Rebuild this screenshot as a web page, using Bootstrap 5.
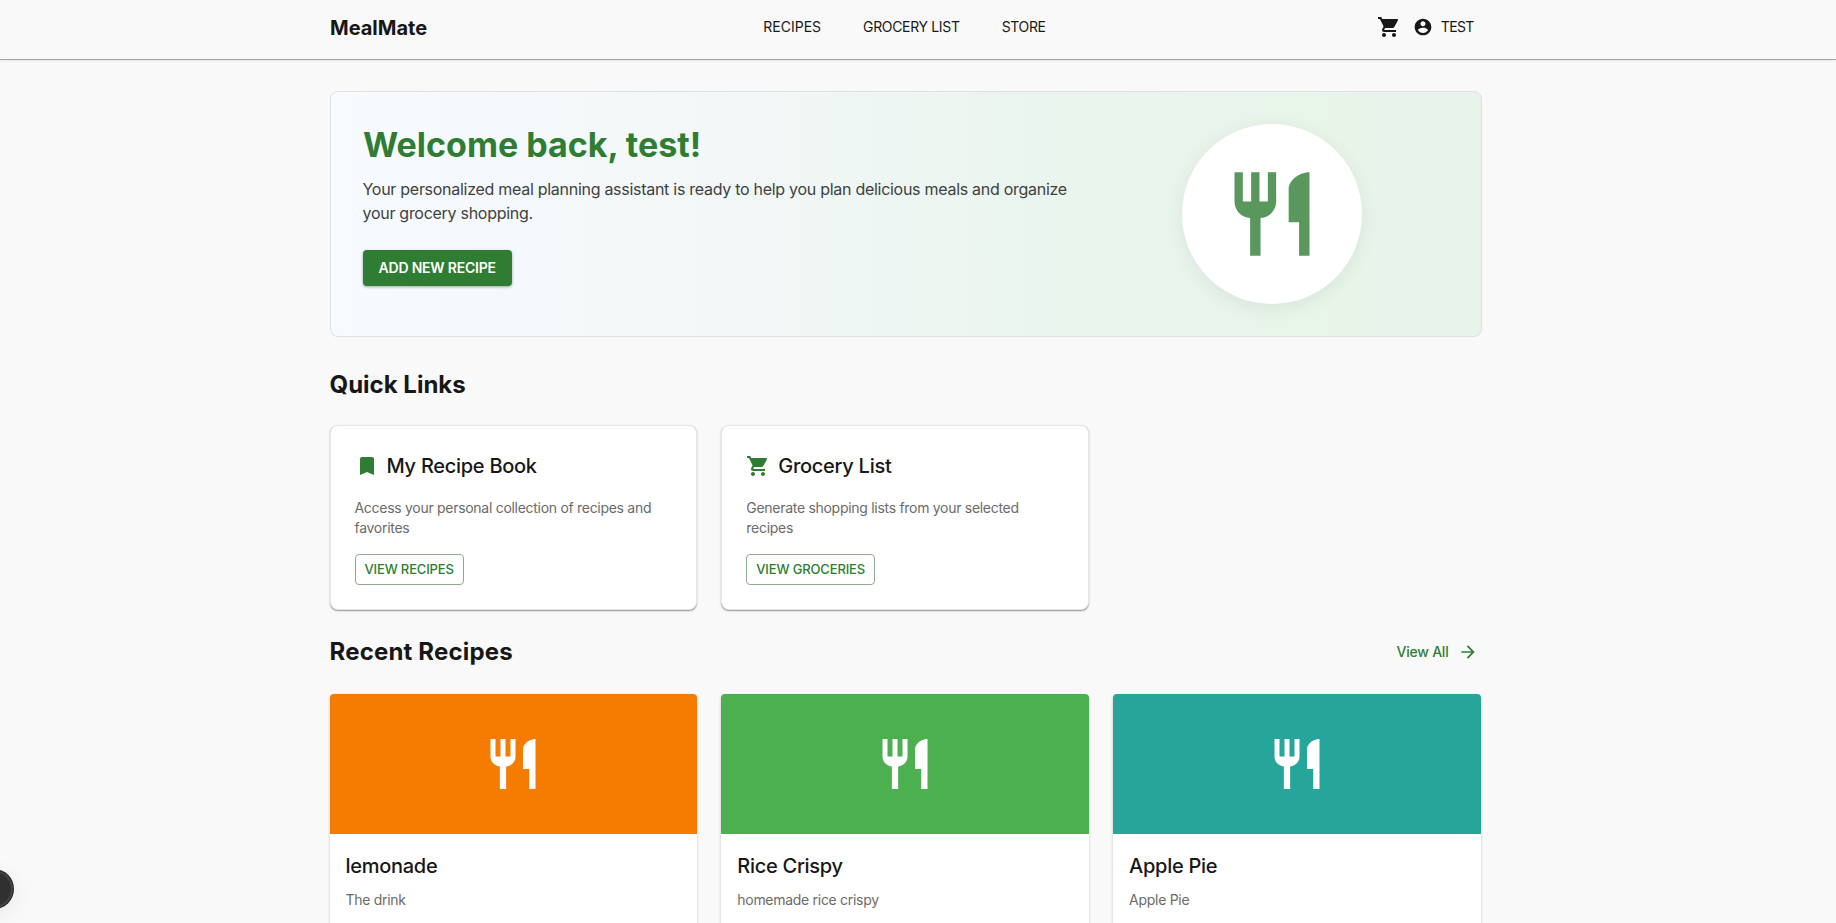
<!DOCTYPE html>
<html lang="en">
<head>
<meta charset="utf-8">
<meta name="viewport" content="width=device-width, initial-scale=1">
<title>MealMate</title>
<link href="https://cdn.jsdelivr.net/npm/bootstrap@5.3.0/dist/css/bootstrap.min.css" rel="stylesheet">
<style>
:root{--green:#2e7d32;--ink:#171717}
html,body{height:100%;overflow:hidden}
body{font-family:Inter,"Liberation Sans",sans-serif;background:#f9f9f9;color:var(--ink);font-size:14px;line-height:20px}
svg{display:block;fill:currentColor;flex:none}
a{color:inherit;text-decoration:none}
h1,h2,h3,p{margin:0}
.page-frame{padding-right:25px}
.content-width{width:1152px;margin:0 auto}
.site-header{height:60px;border-bottom:1px solid #a3a3a3;box-shadow:0 1px 2px rgba(0,0,0,.08);padding-bottom:13px}
.brand{font-size:20px;line-height:24px;font-weight:700;letter-spacing:0;padding:1px 0 0 .5px;display:block}
.site-nav{gap:42px;font-size:14px;color:#1a1a1a;padding-left:6px}
.tight{letter-spacing:-.34px}
.hero{height:246px;margin-top:31px;padding:32px;border:1px solid #dbe0e0;border-radius:8px;background:linear-gradient(90deg,#f7faff 0%,#f1f7f6 38%,#ebf5ef 60%,#e8f5e9 85%,#e8f3e9 100%);gap:24px}
.hero-copy{width:708px}
.hero h1{font-size:34px;line-height:42px;font-weight:700;color:var(--green);margin-bottom:11px;padding-left:.5px}
.hero p{font-size:16px;line-height:24px;letter-spacing:-.28px;color:#3d4142;margin-bottom:25px}
.btn-add{height:36px;padding:0 16px;border-radius:4px;background:var(--green);color:#fff;font-size:14px;font-weight:600;letter-spacing:-.2px;line-height:36px;border:0;box-shadow:0 1px 3px rgba(0,0,0,.35);width:149px;white-space:nowrap}
.btn-add:hover{background:#1b5e20;color:#fff}
.plate{width:180px;height:180px;color:#5a975d;box-shadow:0 4px 20px rgba(0,0,0,.07)}
.section-title{font-size:24px;line-height:32px;font-weight:700}
.card-grid{display:grid;grid-template-columns:repeat(3,367.8px);gap:24px}
.link-card{height:185px;padding:24px;background:#fff;border:1px solid #e6e6e6;border-radius:8px;box-shadow:0 1px 1px rgba(0,0,0,.3),0 1px 3px rgba(0,0,0,.12)}
.link-card svg{color:var(--green)}
.card-heading{font-size:20px;line-height:32px;font-weight:500;letter-spacing:-.28px}
.muted{color:#6b6b6b;letter-spacing:-.29px}
.btn-view{height:31px;border:1px solid #8fac92;border-radius:4px;color:var(--green);font-size:13px;font-weight:500;line-height:26px;padding:0 9px 2px;text-align:center;letter-spacing:-.15px}
.view-all{color:var(--green);font-weight:500;letter-spacing:-.22px;height:36px;gap:9px;padding-right:4px}
.recipe-card{height:260px;background:#fff;border-radius:4px;box-shadow:0 1px 3px rgba(0,0,0,.2),0 1px 1px rgba(0,0,0,.08);overflow:hidden}
.recipe-media{height:140px;color:#fff}
.recipe-text{padding:16px}
.bg-lemon{background:#f57c00}.bg-rice{background:#4caf50}.bg-apple{background:#26a69a}
.corner-button{position:fixed;left:-25px;top:870px;width:38px;height:38px;background:#303030;border:2px solid #444;box-shadow:0 0 0 1px #222,0 6px 24px rgba(0,0,0,.08)}
</style>
</head>
<body>
<svg width="0" height="0" class="position-absolute" aria-hidden="true">
  <symbol id="cart" viewBox="0 0 24 24"><path d="M7 18c-1.1 0-1.99.9-1.99 2S5.9 22 7 22s2-.9 2-2-.9-2-2-2zM1 2v2h2l3.6 7.59-1.35 2.45c-.16.28-.25.61-.25.96 0 1.1.9 2 2 2h12v-2H7.42c-.14 0-.25-.11-.25-.25l.03-.12.9-1.63h7.45c.75 0 1.41-.41 1.75-1.03l3.58-6.49c.08-.14.12-.31.12-.48 0-.55-.45-1-1-1H5.21l-.94-2H1zm16 16c-1.1 0-1.99.9-1.99 2s.89 2 1.99 2 2-.9 2-2-.9-2-2-2z"/></symbol>
  <symbol id="account" viewBox="0 0 24 24"><path d="M12 2C6.48 2 2 6.48 2 12s4.48 10 10 10 10-4.480 10-10S17.520 2 12 2zm0 3c1.660 0 3 1.340 3 3s-1.340 3-3 3-3-1.340-3-3 1.340-3 3-3zm0 14.200c-2.500 0-4.710-1.280-6-3.220.03-1.990 4-3.080 6-3.080 1.990 0 5.970 1.090 6 3.080-1.290 1.940-3.500 3.220-6 3.220z"/></symbol>
  <symbol id="restaurant" viewBox="0 0 24 24"><path d="M11 9H9V2H7v7H5V2H3v7c0 2.120 1.660 3.840 3.750 3.970V22h2.500v-9.030C11.340 12.840 13 11.120 13 9V2h-2v7zm5-3v8h2.500v8H21V2c-2.760 0-5 2.240-5 4z"/></symbol>
  <symbol id="bookmark" viewBox="0 0 24 24"><path d="M17 3H7c-1.100 0-1.990.9-1.990 2L5 21l7-3 7 3V5c0-1.100-.9-2-2-2z"/></symbol>
  <symbol id="arrow" viewBox="0 0 24 24"><path d="m12 4-1.410 1.410L16.170 11H4v2h12.170l-5.580 5.590L12 20l8-8z"/></symbol>
</svg>

<header class="site-header page-frame">
  <div class="content-width h-100 d-flex align-items-center pt-2">
    <div class="col"><a class="brand" href="#">MealMate</a></div>
    <nav class="site-nav d-flex">
      <a href="#">RECIPES</a>
      <a href="#" class="tight">GROCERY LIST</a>
      <a href="#" class="tight">STORE</a>
    </nav>
    <div class="col d-flex justify-content-end align-items-center pe-2">
      <svg width="24" height="24"><use href="#cart"/></svg>
      <a href="#" class="d-flex align-items-center gap-2 ms-2 ps-1">
        <svg width="20" height="20"><use href="#account"/></svg><span style="letter-spacing:-.7px">TEST</span>
      </a>
    </div>
  </div>
</header>

<main class="page-frame">
  <div class="content-width">
    <section class="hero d-flex">
      <div class="hero-copy">
        <h1>Welcome back, test!</h1>
        <p>Your personalized meal planning assistant is ready to help you plan delicious meals and organize your grocery shopping.</p>
        <button class="btn btn-add" type="button">ADD NEW RECIPE</button>
      </div>
      <div class="flex-fill d-flex justify-content-center">
        <div class="plate bg-white rounded-circle d-flex align-items-center justify-content-center">
          <svg width="100" height="100"><use href="#restaurant"/></svg>
        </div>
      </div>
    </section>

    <h2 class="section-title pt-2 mt-4 mb-4">Quick Links</h2>
    <section class="card-grid">
      <article class="link-card">
        <div class="d-flex align-items-center gap-2 mb-3">
          <svg width="24" height="24"><use href="#bookmark"/></svg>
          <h3 class="card-heading">My Recipe Book</h3>
        </div>
        <p class="muted mb-3">Access your personal collection of recipes and favorites</p>
        <button class="btn btn-view" type="button">VIEW RECIPES</button>
      </article>
      <article class="link-card">
        <div class="d-flex align-items-center gap-2 mb-3">
          <svg width="24" height="24"><use href="#cart"/></svg>
          <h3 class="card-heading">Grocery List</h3>
        </div>
        <p class="muted mb-3">Generate shopping lists from your selected recipes</p>
        <button class="btn btn-view" type="button">VIEW GROCERIES</button>
      </article>
    </section>

    <div class="d-flex justify-content-between align-items-center my-4">
      <h2 class="section-title" style="letter-spacing:.18px">Recent Recipes</h2>
      <a class="view-all d-flex align-items-center" href="#">View All <svg width="20" height="20"><use href="#arrow"/></svg></a>
    </div>
    <section class="card-grid">
      <article class="recipe-card">
        <div class="recipe-media bg-lemon d-flex align-items-center justify-content-center"><svg width="60" height="60"><use href="#restaurant"/></svg></div>
        <div class="recipe-text"><h3 class="card-heading mb-2">lemonade</h3><p class="muted">The drink</p></div>
      </article>
      <article class="recipe-card">
        <div class="recipe-media bg-rice d-flex align-items-center justify-content-center"><svg width="60" height="60"><use href="#restaurant"/></svg></div>
        <div class="recipe-text"><h3 class="card-heading mb-2">Rice Crispy</h3><p class="muted">homemade rice crispy</p></div>
      </article>
      <article class="recipe-card">
        <div class="recipe-media bg-apple d-flex align-items-center justify-content-center"><svg width="60" height="60"><use href="#restaurant"/></svg></div>
        <div class="recipe-text"><h3 class="card-heading mb-2">Apple Pie</h3><p class="muted">Apple Pie</p></div>
      </article>
    </section>
  </div>
</main>
<button class="corner-button rounded-circle p-0" type="button" aria-label="Open tools"></button>
<script src="https://cdn.jsdelivr.net/npm/bootstrap@5.3.0/dist/js/bootstrap.bundle.min.js"></script>
</body>
</html>
